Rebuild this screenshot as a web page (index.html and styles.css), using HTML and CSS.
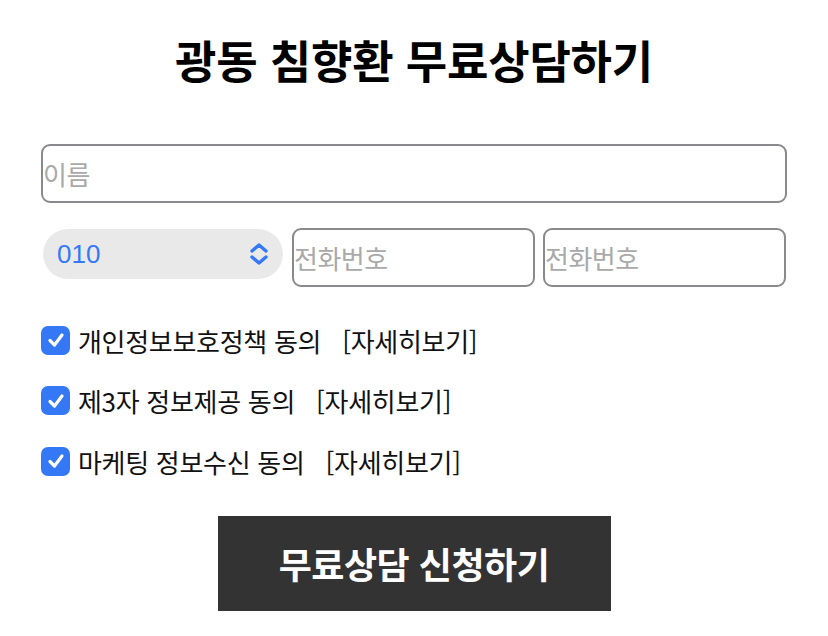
FILE: index.html
```html
<!DOCTYPE html>
<html lang="ko">
<head>
    <meta charset="UTF-8">
    <meta name="viewport" content="width=device-width, initial-scale=1.0">
    <title>광동 침향환 무료상담하기</title>
    <link rel="stylesheet" href="styles.css">
</head>
<body>
    <div class="form-wrap">
        <h1 class="title">광동 침향환 무료상담하기</h1>

        <div class="field-row">
            <input type="text" class="text-input name-input" placeholder="이름">
        </div>

        <div class="field-row phone-row">
            <div class="select-box">
                <select class="tel-select">
                    <option>010</option>
                    <option>011</option>
                    <option>016</option>
                    <option>017</option>
                </select>
                <svg class="select-arrow" width="20" height="26" viewBox="0 0 20 26">
                    <path d="M3 10 L10 4 L17 10 M3 16 L10 22 L17 16" fill="none" stroke="#3478f6" stroke-width="3.4" stroke-linecap="round" stroke-linejoin="round"/>
                </svg>
            </div>
            <input type="text" class="text-input" placeholder="전화번호">
            <input type="text" class="text-input" placeholder="전화번호">
        </div>

        <!-- 약관 동의 -->
        <div class="agree-list">
            <label class="agree-item">
                <span class="check"><svg width="20" height="18" viewBox="0 0 20 18"><path d="M4 9.5 L8.5 14 L16 4" fill="none" stroke="#fff" stroke-width="3.2" stroke-linecap="round" stroke-linejoin="round"/></svg></span>
                <span class="agree-text">개인정보보호정책 동의</span>
                <span class="detail">[자세히보기]</span>
            </label>
            <label class="agree-item">
                <span class="check"><svg width="20" height="18" viewBox="0 0 20 18"><path d="M4 9.5 L8.5 14 L16 4" fill="none" stroke="#fff" stroke-width="3.2" stroke-linecap="round" stroke-linejoin="round"/></svg></span>
                <span class="agree-text">제3자 정보제공 동의</span>
                <span class="detail">[자세히보기]</span>
            </label>
            <label class="agree-item">
                <span class="check"><svg width="20" height="18" viewBox="0 0 20 18"><path d="M4 9.5 L8.5 14 L16 4" fill="none" stroke="#fff" stroke-width="3.2" stroke-linecap="round" stroke-linejoin="round"/></svg></span>
                <span class="agree-text">마케팅 정보수신 동의</span>
                <span class="detail">[자세히보기]</span>
            </label>
        </div>

        <div class="submit-wrap">
            <button class="submit-btn">무료상담 신청하기</button>
        </div>
    </div>
</body>
</html>
```

FILE: styles.css
```css
body {
    margin: 0;
    background-color: #fff;
    font-family: "Noto Sans CJK KR", "Noto Sans", sans-serif;
    color: #111;
}
.form-wrap {
    width: 746px;
    margin: 0 auto;
    padding-top: 26px;
}
.title {
    margin: 0 0 50px;
    font-size: 45px;
    line-height: 68px;
    font-weight: 700;
    text-align: center;
    color: #000;
    letter-spacing: -0.2px;
}
.field-row {
    margin-bottom: 25px;
}
.text-input {
    box-sizing: border-box;
    height: 59px;
    padding: 0;
    border: 2px solid #8a8a8e;
    border-radius: 9px;
    font-family: inherit;
    font-size: 26px;
    color: #333;
    outline: none;
}
.text-input::placeholder {
    color: #a9a9a9;
    letter-spacing: -0.5px;
}
.name-input {
    width: 100%;
}
.phone-row {
    display: flex;
    align-items: flex-start;
    gap: 8px;
    margin-bottom: 0;
    padding-left: 2px;
}
.phone-row .text-input {
    width: 243px;
}
.select-box {
    position: relative;
    width: 240px;
    margin-top: 1px;
    margin-right: 1px;
}
.tel-select {
    appearance: none;
    -webkit-appearance: none;
    width: 100%;
    height: 50px;
    padding: 0 0 0 14px;
    border: none;
    border-radius: 25px;
    background-color: #e9e9ea;
    color: #3478f6;
    font-family: "Liberation Sans", Arial, sans-serif;
    font-size: 26px;
    outline: none;
}
.select-arrow {
    position: absolute;
    right: 14px;
    top: 12px;
    pointer-events: none;
}
.agree-list {
    margin-top: 23px;
}
.agree-item {
    display: flex;
    align-items: center;
    height: 60.5px;
    font-size: 26px;
    letter-spacing: -0.3px;
    cursor: pointer;
}
.check {
    display: flex;
    align-items: center;
    justify-content: center;
    width: 29px;
    height: 29px;
    margin-right: 8px;
    border-radius: 7px;
    background-color: #3478f6;
}
.detail {
    margin-left: 21px;
}
.submit-wrap {
    display: flex;
    justify-content: center;
    margin-top: 24px;
}
.submit-btn {
    width: 393px;
    height: 95px;
    border: none;
    background-color: #333;
    color: #fff;
    font-family: inherit;
    font-size: 36px;
    font-weight: 700;
    letter-spacing: -0.5px;
    cursor: pointer;
}
```
